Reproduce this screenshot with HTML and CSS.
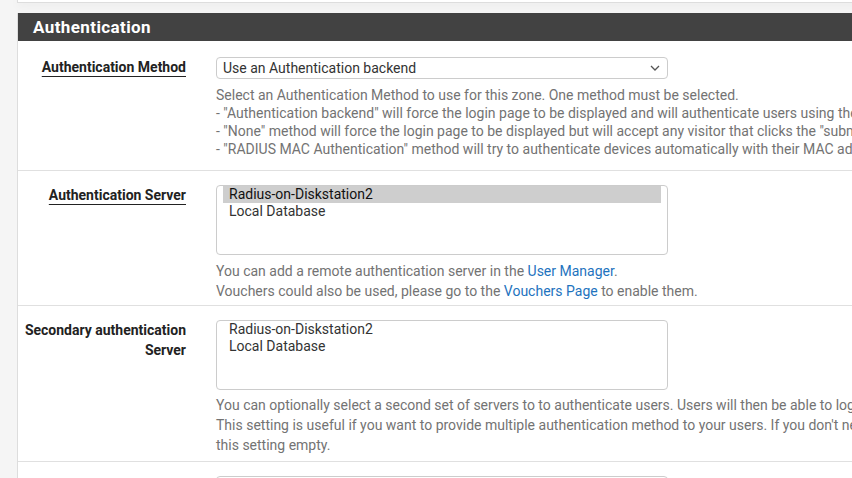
FILE: index.html
```html
<!DOCTYPE html>
<html lang="en">
<head>
    <meta charset="UTF-8">
    <meta name="viewport" content="width=device-width, initial-scale=1.0">
    <title>Captive Portal - Authentication</title>
    <link rel="stylesheet" href="styles.css">
</head>
<body>
<div class="panel panel-prev"></div>
<div class="panel">
    <div class="panel-heading">
        <h2 class="panel-title">Authentication</h2>
    </div>
    <div class="panel-body">
        <div class="form-group">
            <div class="label-col"><span class="required">Authentication Method</span></div>
            <div class="control-col">
                <div class="select">
                    <span>Use an Authentication backend</span>
                    <svg class="chevron" width="10" height="6" viewBox="0 0 10 6"><path d="M1 1 L5 5 L9 1" fill="none" stroke="#555" stroke-width="1.3"/></svg>
                </div>
                <div class="help help-compact">
                    Select an Authentication Method to use for this zone. One method must be selected.<br>
                    - "Authentication backend" will force the login page to be displayed and will authenticate users using their login and password, or using vouchers.<br>
                    - "None" method will force the login page to be displayed but will accept any visitor that clicks the "submit" button.<br>
                    - "RADIUS MAC Authentication" method will try to authenticate devices automatically with their MAC address without displaying any login page.
                </div>
            </div>
        </div>
        <div class="form-group">
            <div class="label-col"><span class="required">Authentication Server</span></div>
            <div class="control-col">
                <div class="listbox">
                    <div class="option selected">Radius-on-Diskstation2</div>
                    <div class="option">Local Database</div>
                </div>
                <div class="help">
                    You can add a remote authentication server in the <a href="#">User Manager</a>.<br>
                    Vouchers could also be used, please go to the <a href="#">Vouchers Page</a> to enable them.
                </div>
            </div>
        </div>
        <div class="form-group">
            <div class="label-col"><span>Secondary authentication<br>Server</span></div>
            <div class="control-col">
                <div class="listbox">
                    <div class="option">Radius-on-Diskstation2</div>
                    <div class="option">Local Database</div>
                </div>
                <div class="help help-tight">
                    You can optionally select a second set of servers to to authenticate users. Users will then be able to login using separated localized user forms.<br>
                    This setting is useful if you want to provide multiple authentication method to your users. If you don't need multiple authentication method, then leave<br>
                    this setting empty.
                </div>
            </div>
        </div>
        <div class="form-group">
            <div class="label-col"></div>
            <div class="control-col">
                <div class="select"></div>
            </div>
        </div>
    </div>
</div>
</body>
</html>
```

FILE: styles.css
```css
body {
    margin: 0;
    padding-left: 17px;
    font-family: Roboto, "Liberation Sans", sans-serif;
    background-color: #f5f5f5;
    overflow: hidden;
}
.panel {
    width: 1400px;
    background-color: #fff;
    border-left: 1px solid #ddd;
}
.panel-prev {
    height: 2px;
    border-bottom: 1px solid #ddd;
    box-shadow: 0 2px 8px rgba(0, 0, 0, 0.08);
    margin-bottom: 10px;
}
.panel-heading {
    background-color: #424242;
    height: 28px;
    padding-left: 15px;
}
.panel-title {
    margin: 0;
    color: #fff;
    font-size: 17px;
    font-weight: bold;
    line-height: 29px;
    letter-spacing: 0.4px;
}
.panel-body {
    padding-top: 2px;
}
.form-group {
    display: grid;
    grid-template-columns: 183px 1fr;
    padding: 14px 0 4px;
    border-bottom: 1px solid #e0e0e0;
}
.label-col {
    padding-right: 15px;
    text-align: right;
    font-size: 14px;
    font-weight: bold;
    line-height: 20px;
    color: #222;
}
.label-col .required {
    text-decoration: underline;
    text-decoration-thickness: 1px;
    text-underline-offset: 4px;
}
.control-col {
    padding-left: 15px;
}
.select {
    box-sizing: border-box;
    display: flex;
    justify-content: space-between;
    align-items: center;
    width: 452px;
    height: 22px;
    padding: 0 6px;
    font-size: 14px;
    color: #333;
    border: 1px solid #ccc;
    border-radius: 4px;
}
.chevron {
    margin-right: 1px;
}
.listbox {
    box-sizing: border-box;
    width: 452px;
    height: 70px;
    padding: 0 6px;
    border: 1px solid #ccc;
    border-radius: 4px;
    font-size: 14px;
    color: #333;
}
.option {
    padding-left: 6px;
    line-height: 17px;
}
.option.selected {
    background-color: #cecece;
    color: #111;
}
.help {
    margin-top: 6px;
    font-size: 14px;
    line-height: 20px;
    color: #737373;
    white-space: nowrap;
}
.help-compact {
    margin-top: 7px;
    margin-bottom: 8px;
    line-height: 18px;
}
.help-tight {
    margin-top: 5px;
    margin-bottom: 2px;
}
.help a {
    color: #1e73be;
    text-decoration: none;
}
```
